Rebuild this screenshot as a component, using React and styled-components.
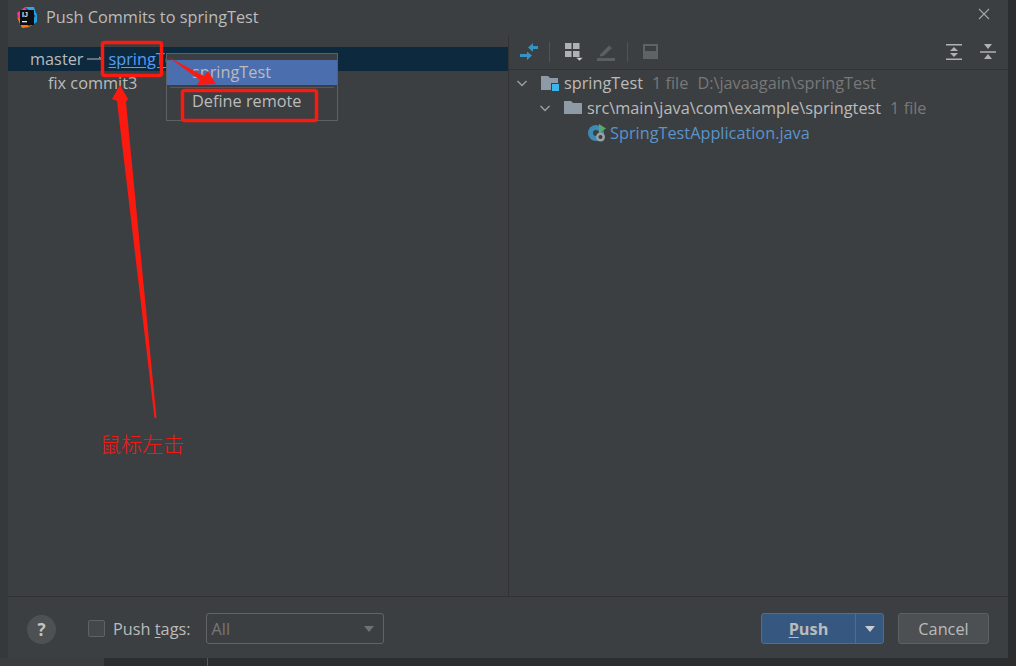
import React from "react";
import styled, { createGlobalStyle } from "styled-components";

const Global = createGlobalStyle`
  html, body { margin: 0; padding: 0; background: #2b2d2f; }
  body { font-family: "Open Sans", "Noto Sans CJK SC", sans-serif; }
  * { box-sizing: border-box; }
`;

const Page = styled.div`
  position: relative;
  width: 1016px;
  height: 666px;
  overflow: hidden;
  background: #2b2d2f;
  padding: 0 8px 8px;
`;

const LeftStrip = styled.div`
  position: absolute;
  left: 0;
  top: 0;
  width: 8px;
  height: 100%;
  background: #36393b;
`;

const BottomStrip = styled.div`
  position: absolute;
  left: 0;
  bottom: 0;
  width: 104px;
  height: 8px;
  background: #3a3c3e;
`;

const BackDivider = styled.div`
  position: absolute;
  left: 207px;
  bottom: 0;
  width: 1px;
  height: 8px;
  background: #55585a;
`;

const Dialog = styled.div`
  position: relative;
  width: 1000px;
  height: 658px;
  background: #3c3f41;
  display: flex;
  flex-direction: column;
`;

const TitleBar = styled.div`
  height: 35px;
  flex: none;
  display: flex;
  align-items: center;
  padding: 0 18px 1px 9px;
  gap: 9px;
  color: #bbbbbb;
  font-size: 16.3px;
`;

const TitleText = styled.span`
  flex: 1;
`;

const CloseIcon = styled.svg`
  margin-top: -6px;
`;

const Panels = styled.div`
  flex: 1;
  display: flex;
  min-height: 0;
  border-bottom: 1px solid #323232;
`;

const LeftPanel = styled.div`
  width: 501px;
  flex: none;
  padding-top: 12px;
  border-right: 1px solid #323232;
`;

const RightPanel = styled.div`
  flex: 1;
  display: flex;
  flex-direction: column;
`;

const CommitRow = styled.div`
  height: 24px;
  display: flex;
  align-items: center;
  font-size: 16.3px;
  color: #bbbbbb;
  padding-left: ${(p) => p.$indent}px;
  padding-bottom: 1px;
  background: ${(p) => (p.$selected ? "#0d293e" : "transparent")};
`;

const Remote = styled.span`
  color: #589df6;
  text-decoration: underline;
  text-underline-offset: 2px;
`;

const RefArrow = styled.svg`
  width: 16px;
  height: 10px;
  flex: none;
  margin: 0 5px 0 4px;
`;

const Popup = styled.div`
  position: absolute;
  left: 166px;
  top: 53px;
  width: 172px;
  height: 68px;
  border: 1px solid #5e6162;
  background: #3c3f41;
  padding-top: 6px;
  color: #bbbbbb;
  font-size: 16.3px;
`;

const PopupItem = styled.div`
  height: 25px;
  line-height: 24px;
  padding-left: 25px;
  background: ${(p) => (p.$active ? "#4b6eaf" : "transparent")};
`;

const PopupSep = styled.div`
  height: 1px;
  margin: 2px 3px 1px;
  background: #55585a;
`;

const Toolbar = styled.div`
  height: 35px;
  flex: none;
  display: flex;
  align-items: center;
  padding: 0 11px;
  border-bottom: 1px solid #323232;
`;

const ToolIcon = styled.svg`
  width: 18px;
  height: 18px;
  flex: none;
  margin-left: ${(p) => p.$gap || 0}px;
`;

const ToolSep = styled.div`
  width: 1px;
  height: 20px;
  background: #515355;
  margin-left: ${(p) => p.$gap}px;
`;

const Spacer = styled.div`
  flex: 1;
`;

const Tree = styled.div``;

const TreeRow = styled.div`
  height: 25px;
  display: flex;
  align-items: center;
  padding-left: ${(p) => p.$indent}px;
  font-size: 16.3px;
  color: #bbbbbb;
`;

const Chevron = styled.svg`
  width: 12px;
  height: 12px;
  flex: none;
  margin-right: 12px;
`;

const RowIcon = styled.svg`
  width: 20px;
  height: 18px;
  flex: none;
  margin-right: ${(p) => p.$gap || 4}px;
`;

const Muted = styled.span`
  color: #787878;
  margin-left: ${(p) => p.$gap}px;
  white-space: pre;
`;

const FileName = styled.span`
  color: #5b94c9;
`;

const Footer = styled.div`
  height: 61px;
  flex: none;
  display: flex;
  align-items: center;
  padding: 2px 19px 0 19px;
  font-size: 16.3px;
  color: #bbbbbb;
`;

const Help = styled.div`
  width: 29px;
  height: 29px;
  margin-top: 1px;
  border-radius: 50%;
  background: #4d5153;
  color: #c4c4c4;
  font-weight: 700;
  font-size: 17px;
  display: flex;
  align-items: center;
  justify-content: center;
  margin-right: 32px;
`;

const Check = styled.div`
  width: 17px;
  height: 17px;
  border: 1px solid #5f6263;
  border-radius: 2px;
  background: #43494a;
  margin-right: 8px;
`;

const Select = styled.div`
  width: 178px;
  height: 31px;
  margin-left: 15px;
  border: 1px solid #646464;
  border-radius: 3px;
  display: flex;
  align-items: center;
  justify-content: space-between;
  padding: 0 9px 0 5px;
  color: #777777;
`;

const Caret = styled.span`
  width: 0;
  height: 0;
  border-left: 5.5px solid transparent;
  border-right: 5.5px solid transparent;
  border-top: 6px solid ${(p) => p.$color};
`;

const PushGroup = styled.div`
  width: 123px;
  height: 31px;
  border: 1px solid #4c708c;
  border-radius: 3px;
  background: #365880;
  display: flex;
  color: #bbbbbb;
  font-weight: 700;
  margin-right: 14px;
`;

const PushLabel = styled.div`
  flex: 1;
  display: flex;
  align-items: center;
  justify-content: center;
`;

const PushArrow = styled.div`
  width: 28px;
  border-left: 1px solid #4c708c;
  display: flex;
  align-items: center;
  justify-content: center;
`;

const CancelButton = styled.div`
  width: 91px;
  height: 31px;
  border: 1px solid #5e6060;
  border-radius: 3px;
  background: #4c5052;
  display: flex;
  align-items: center;
  justify-content: center;
`;

const Mnemonic = styled.span`
  text-decoration: underline;
  text-underline-offset: 2px;
`;

const Overlay = styled.svg`
  position: absolute;
  left: 0;
  top: 0;
  pointer-events: none;
`;

const Note = styled.div`
  position: absolute;
  left: 100px;
  top: 429px;
  font-size: 21px;
  line-height: 28px;
  color: #f01a14;
  font-family: "Noto Sans CJK SC", sans-serif;
  font-weight: 300;
`;

const AppLogo = () => (
  <svg width="20" height="21" viewBox="0 0 20 21">
    <path d="M0 6 L8 0 L11 6 L3 18 Z" fill="#f5378e" />
    <path d="M8 0 L17 0 L20 10 L13 4 Z" fill="#25a8f0" />
    <path d="M0 10 L5 21 L13 20 Z" fill="#f97a12" />
    <path d="M12 20 L20 15 L20 6 Z" fill="#1d9fe8" />
    <rect x="3" y="3" width="14" height="15" fill="#0e0e10" />
    <text x="5" y="10" fontSize="7" fontWeight="700" fontFamily="Liberation Sans" fill="#e8e8e8">IJ</text>
    <rect x="5" y="14" width="5" height="1.3" fill="#e8e8e8" />
  </svg>
);

const Down = () => (
  <Chevron viewBox="0 0 12 12">
    <path d="M1.5 4 L6 8.5 L10.5 4" fill="none" stroke="#9a9c9e" strokeWidth="1.5" />
  </Chevron>
);

export default function App() {
  return (
    <Page>
      <Global />
      <LeftStrip />
      <BottomStrip />
      <BackDivider />
      <Dialog>
        <TitleBar>
          <AppLogo />
          <TitleText>Push Commits to springTest</TitleText>
          <CloseIcon width="12" height="12" viewBox="0 0 12 12">
            <path d="M1 1 L11 11 M11 1 L1 11" stroke="#a0a2a4" strokeWidth="1.2" />
          </CloseIcon>
        </TitleBar>
        <Panels>
          <LeftPanel>
            <CommitRow $selected $indent={22}>
              master
              <RefArrow viewBox="0 0 16 10">
                <path d="M0 5 H15 M12 3 L15 5" fill="none" stroke="#bbbbbb" strokeWidth="1" />
              </RefArrow>
              <Remote>springTest</Remote>
            </CommitRow>
            <CommitRow $indent={40}>fix commit3</CommitRow>
          </LeftPanel>
          <RightPanel>
            <Toolbar>
              <ToolIcon viewBox="0 0 18 18">
                <path d="M8 4.5 L13 0 L13 3 L18 3 L18 6 L13 6 L13 9 Z M12 12.5 L7 8.5 L7 11 L0 11 L0 14 L7 14 L7 17 Z" fill="#3592c4" />
              </ToolIcon>
              <ToolSep $gap={11} />
              <ToolIcon $gap={15} viewBox="0 0 18 18">
                <path d="M0 0 h6.5 v6 h-6.5 z M8 0 h6.5 v6 h-6.5 z M0 8 h6.5 v6 h-6.5 z M8 8 h6.5 v6 h-6.5 z" fill="#afb1b3" />
                <path d="M11 14.5 h7 l-3.5 3.5 z" fill="#d8d8d8" stroke="#3c3f41" strokeWidth=".6" />
              </ToolIcon>
              <ToolIcon $gap={14} viewBox="0 0 18 18">
                <path d="M3 11.5 L12 2.5 L15 5 L6.5 13 L3 13.5 Z" fill="#5c5f61" />
                <rect x="0" y="15" width="18" height="3" fill="#5c5f61" />
              </ToolIcon>
              <ToolSep $gap={12} />
              <ToolIcon $gap={14} viewBox="0 0 18 18">
                <path d="M1 1 h15 v15 h-15 z M3 3 v5 h11 v-5 z" fill="#606365" fillRule="evenodd" />
              </ToolIcon>
              <Spacer />
              <ToolIcon viewBox="0 0 18 18">
                <path d="M1 1 h16 v1.5 h-16 z M1 15.5 h16 v1.5 h-16 z M9 4 l4 4 h-8 z M9 14 l-4 -4 h8 z" fill="#afb1b3" />
              </ToolIcon>
              <ToolIcon $gap={16} viewBox="0 0 18 18">
                <path d="M1 8.2 h16 v1.5 h-16 z M5 1 h8 l-4 5 z M5 16 h8 l-4 -5 z" fill="#afb1b3" />
              </ToolIcon>
            </Toolbar>
            <Tree>
              <TreeRow $indent={7}>
                <Down />
                <RowIcon viewBox="0 0 20 18">
                  <path d="M1 2 h7 l2 2 h8 v5 h-7 v7 h-10 z" fill="#8e9ba6" />
                  <rect x="12" y="10" width="7" height="7" fill="#3fb4e8" />
                </RowIcon>
                springTest<Muted $gap={9}>1 file</Muted><Muted $gap={9}>D:\javaagain\springTest</Muted>
              </TreeRow>
              <TreeRow $indent={30}>
                <Down />
                <RowIcon viewBox="0 0 20 18">
                  <path d="M1 2 h7 l2 2 h9 v11 h-18 z" fill="#8e9ba6" />
                </RowIcon>
                src\main\java\com\example\springtest<Muted $gap={9}>1 file</Muted>
              </TreeRow>
              <TreeRow $indent={78}>
                <RowIcon $gap={3} viewBox="0 0 20 18">
                  <circle cx="9" cy="9" r="8" fill="#3d8bb0" />
                  <circle cx="9" cy="9" r="3" fill="#3c3f41" />
                  <path d="M12 0 L19 4.5 L12 9 Z" fill="#59a869" />
                  <circle cx="13.5" cy="13" r="4.5" fill="#9aa0a4" />
                  <circle cx="13.5" cy="13" r="2" fill="#3c3f41" />
                </RowIcon>
                <FileName>SpringTestApplication.java</FileName>
              </TreeRow>
            </Tree>
          </RightPanel>
        </Panels>
        <Footer>
          <Help>?</Help>
          <Check />
          <span>
            Push <Mnemonic>t</Mnemonic>ags:
          </span>
          <Select>
            All
            <Caret $color="#6f7173" />
          </Select>
          <Spacer />
          <PushGroup>
            <PushLabel>
              <span>
                <Mnemonic>P</Mnemonic>ush
              </span>
            </PushLabel>
            <PushArrow>
              <Caret $color="#c8ccd0" />
            </PushArrow>
          </PushGroup>
          <CancelButton>Cancel</CancelButton>
        </Footer>
      </Dialog>
      <Popup>
        <PopupItem $active>springTest</PopupItem>
        <PopupSep />
        <PopupItem>Define remote</PopupItem>
      </Popup>
      <Overlay width="1016" height="666" viewBox="0 0 1016 666">
        <rect x="102.5" y="42.5" width="59" height="33" rx="2" fill="none" stroke="#fb1a10" strokeWidth="3.5" />
        <rect x="182.5" y="90.5" width="134" height="30" rx="2" fill="none" stroke="#fb1a10" strokeWidth="3.5" />
        <path d="M154.5 418 L156.5 418 L126 102 L128 99 L120 85 L112 99 L117 101 Z" fill="#fb1a10" />
        <path d="M168 57 L204 76 L208 71 L216 84 L197 85 L200 80 Z" fill="#fb1a10" />
      </Overlay>
      <Note>鼠标左击</Note>
    </Page>
  );
}
